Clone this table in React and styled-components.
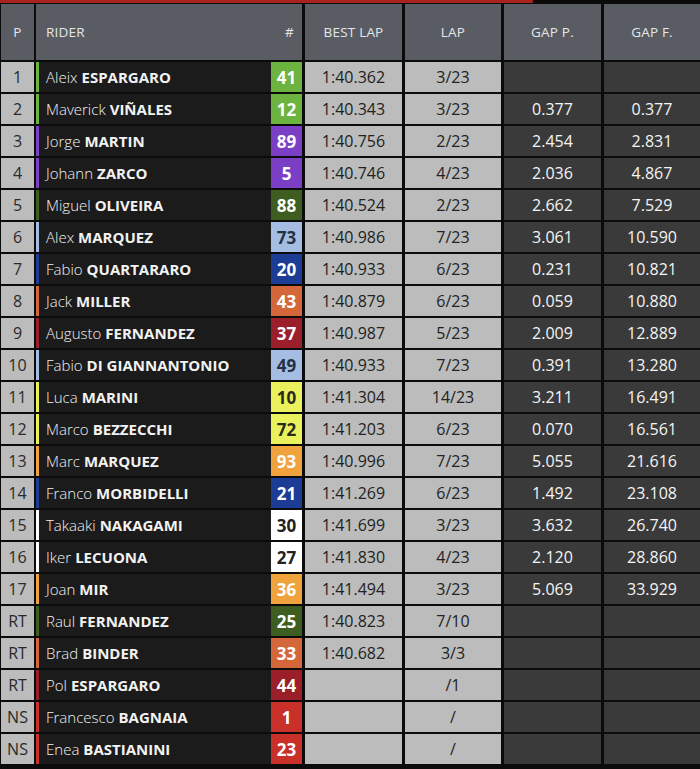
import React from "react";
import styled, { createGlobalStyle } from "styled-components";

const GlobalStyle = createGlobalStyle`
  html, body {
    margin: 0;
    padding: 0;
    background: #0b0b0b;
  }
  body {
    font-family: "Open Sans", "Noto Sans", "Liberation Sans", sans-serif;
  }
`;

const teams = {
  aprilia: { bg: "#6cb33f", fg: "#ffffff" },
  pramac: { bg: "#7a3fc4", fg: "#ffffff" },
  rnf: { bg: "#3d5e20", fg: "#ffffff" },
  gresini: { bg: "#a5bde3", fg: "#263042" },
  yamaha: { bg: "#1c3c96", fg: "#ffffff" },
  ktm: { bg: "#d4673a", fg: "#ffffff" },
  tech3: { bg: "#9b1f2b", fg: "#ffffff" },
  vr46: { bg: "#e9f25c", fg: "#2a2a1a" },
  repsol: { bg: "#f0a23c", fg: "#ffffff" },
  lcr: { bg: "#ffffff", fg: "#222222" },
  ducati: { bg: "#c9302a", fg: "#ffffff" },
};

const riders = [
  ["1", "Aleix", "ESPARGARO", "41", "aprilia", "1:40.362", "3/23", "", ""],
  ["2", "Maverick", "VIÑALES", "12", "aprilia", "1:40.343", "3/23", "0.377", "0.377"],
  ["3", "Jorge", "MARTIN", "89", "pramac", "1:40.756", "2/23", "2.454", "2.831"],
  ["4", "Johann", "ZARCO", "5", "pramac", "1:40.746", "4/23", "2.036", "4.867"],
  ["5", "Miguel", "OLIVEIRA", "88", "rnf", "1:40.524", "2/23", "2.662", "7.529"],
  ["6", "Alex", "MARQUEZ", "73", "gresini", "1:40.986", "7/23", "3.061", "10.590"],
  ["7", "Fabio", "QUARTARARO", "20", "yamaha", "1:40.933", "6/23", "0.231", "10.821"],
  ["8", "Jack", "MILLER", "43", "ktm", "1:40.879", "6/23", "0.059", "10.880"],
  ["9", "Augusto", "FERNANDEZ", "37", "tech3", "1:40.987", "5/23", "2.009", "12.889"],
  ["10", "Fabio", "DI GIANNANTONIO", "49", "gresini", "1:40.933", "7/23", "0.391", "13.280"],
  ["11", "Luca", "MARINI", "10", "vr46", "1:41.304", "14/23", "3.211", "16.491"],
  ["12", "Marco", "BEZZECCHI", "72", "vr46", "1:41.203", "6/23", "0.070", "16.561"],
  ["13", "Marc", "MARQUEZ", "93", "repsol", "1:40.996", "7/23", "5.055", "21.616"],
  ["14", "Franco", "MORBIDELLI", "21", "yamaha", "1:41.269", "6/23", "1.492", "23.108"],
  ["15", "Takaaki", "NAKAGAMI", "30", "lcr", "1:41.699", "3/23", "3.632", "26.740"],
  ["16", "Iker", "LECUONA", "27", "lcr", "1:41.830", "4/23", "2.120", "28.860"],
  ["17", "Joan", "MIR", "36", "repsol", "1:41.494", "3/23", "5.069", "33.929"],
  ["RT", "Raul", "FERNANDEZ", "25", "rnf", "1:40.823", "7/10", "", ""],
  ["RT", "Brad", "BINDER", "33", "ktm", "1:40.682", "3/3", "", ""],
  ["RT", "Pol", "ESPARGARO", "44", "tech3", "", "/1", "", ""],
  ["NS", "Francesco", "BAGNAIA", "1", "ducati", "", "/", "", ""],
  ["NS", "Enea", "BASTIANINI", "23", "ducati", "", "/", "", ""],
];

const Page = styled.div`
  width: 700px;
  height: 769px;
  background: #0b0b0b;
  overflow: hidden;
`;

const TopBar = styled.div`
  width: 533px;
  height: 3px;
  background: #a8231d;
  margin-bottom: 1px;
`;

const Table = styled.div`
  display: flex;
  flex-direction: column;
  gap: 2px;
  padding-left: 1px;
`;

const Row = styled.div`
  display: grid;
  grid-template-columns: 32px 266px 97px 96px 97px 96px;
  column-gap: 3px;
  height: ${({ $head }) => ($head ? "56px" : "30px")};
  & > :first-child {
    margin-right: -1px;
  }
`;

const HeadCell = styled.div`
  background: #595d63;
  color: #e4e6e8;
  font-size: 13.5px;
  display: flex;
  align-items: center;
  justify-content: center;
  letter-spacing: 0.2px;
`;

const RiderHead = styled(HeadCell)`
  justify-content: space-between;
  padding: 0 8px 0 10px;
`;

const PosCell = styled.div`
  background: #bcbcbc;
  color: #2a2a2a;
  font-size: 16px;
  display: flex;
  align-items: center;
  justify-content: center;
`;

const RiderCell = styled.div`
  display: flex;
  background: #1b1b1b;
  border-left: 3px solid ${({ $stripe }) => $stripe};
`;

const Name = styled.div`
  flex: 1;
  display: flex;
  align-items: center;
  padding-left: 7px;
  color: #f2f2f2;
  font-size: 15px;
  font-weight: 300;
  white-space: nowrap;
  b {
    font-weight: 700;
    margin-left: 4px;
  }
`;

const Badge = styled.div`
  width: 31px;
  background: ${({ $bg }) => $bg};
  color: ${({ $fg }) => $fg};
  font-size: 17px;
  font-weight: 700;
  display: flex;
  align-items: center;
  justify-content: center;
`;

const LightCell = styled.div`
  background: #bcbcbc;
  color: #222222;
  font-size: 16px;
  display: flex;
  align-items: center;
  justify-content: center;
`;

const DarkCell = styled.div`
  background: #3a3a3a;
  color: #f4f4f4;
  font-size: 16px;
  display: flex;
  align-items: center;
  justify-content: center;
`;

export default function App() {
  return (
    <Page>
      <GlobalStyle />
      <TopBar />
      <Table>
        <Row $head>
          <HeadCell>P</HeadCell>
          <RiderHead>
            <span>RIDER</span>
            <span>#</span>
          </RiderHead>
          <HeadCell>BEST LAP</HeadCell>
          <HeadCell>LAP</HeadCell>
          <HeadCell>GAP P.</HeadCell>
          <HeadCell>GAP F.</HeadCell>
        </Row>
        {riders.map(([pos, first, last, num, team, best, lap, gapP, gapF]) => (
          <Row key={num}>
            <PosCell>{pos}</PosCell>
            <RiderCell $stripe={teams[team].bg}>
              <Name>
                {first}
                <b>{last}</b>
              </Name>
              <Badge $bg={teams[team].bg} $fg={teams[team].fg}>
                {num}
              </Badge>
            </RiderCell>
            <LightCell>{best}</LightCell>
            <LightCell>{lap}</LightCell>
            <DarkCell>{gapP}</DarkCell>
            <DarkCell>{gapF}</DarkCell>
          </Row>
        ))}
      </Table>
    </Page>
  );
}
